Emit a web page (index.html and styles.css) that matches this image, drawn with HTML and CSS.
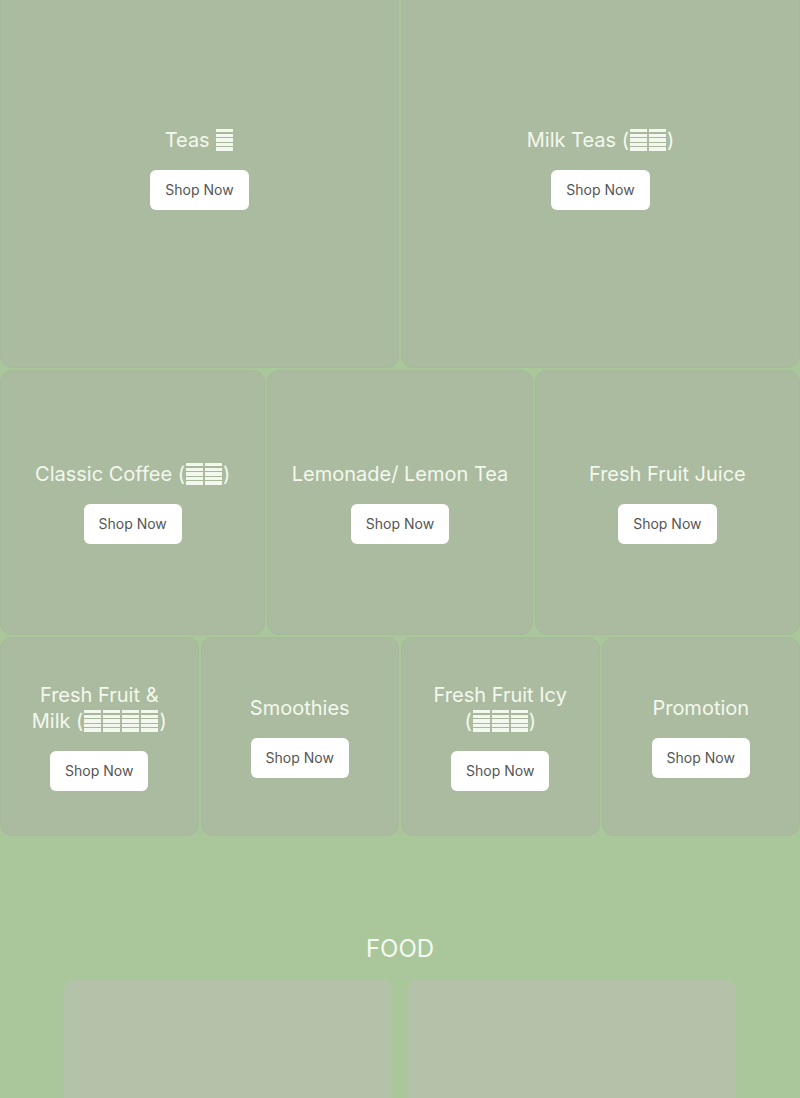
FILE: index.html
```html
<!DOCTYPE html>
<html lang="en">
<head>
<meta charset="utf-8">
<title>Menu</title>
<link rel="stylesheet" href="styles.css">
</head>
<body>
<main class="page">
  <section class="drinks">
    <div class="row row-2">
      <div class="card">
        <h3 class="title">Teas <span class="tofu"></span></h3>
        <a class="btn" href="#">Shop Now</a>
      </div>
      <div class="card">
        <h3 class="title">Milk Teas (<span class="tofu"></span><span class="tofu"></span>)</h3>
        <a class="btn" href="#">Shop Now</a>
      </div>
    </div>
    <div class="row row-3">
      <div class="card">
        <h3 class="title">Classic Coffee (<span class="tofu"></span><span class="tofu"></span>)</h3>
        <a class="btn" href="#">Shop Now</a>
      </div>
      <div class="card">
        <h3 class="title">Lemonade/ Lemon Tea</h3>
        <a class="btn" href="#">Shop Now</a>
      </div>
      <div class="card">
        <h3 class="title">Fresh Fruit Juice</h3>
        <a class="btn" href="#">Shop Now</a>
      </div>
    </div>
    <div class="row row-4">
      <div class="card">
        <h3 class="title">Fresh Fruit &amp;<br>Milk (<span class="tofu"></span><span class="tofu"></span><span class="tofu"></span><span class="tofu"></span>)</h3>
        <a class="btn" href="#">Shop Now</a>
      </div>
      <div class="card">
        <h3 class="title">Smoothies</h3>
        <a class="btn" href="#">Shop Now</a>
      </div>
      <div class="card">
        <h3 class="title">Fresh Fruit Icy<br>(<span class="tofu"></span><span class="tofu"></span><span class="tofu"></span>)</h3>
        <a class="btn" href="#">Shop Now</a>
      </div>
      <div class="card">
        <h3 class="title">Promotion</h3>
        <a class="btn" href="#">Shop Now</a>
      </div>
    </div>
  </section>
  <section class="food">
    <h2 class="food-heading">FOOD</h2>
    <div class="food-grid">
      <div class="food-card"></div>
      <div class="food-card"></div>
    </div>
  </section>
</main>
</body>
</html>
```
FILE: styles.css
```css
html, body {
  margin: 0;
  padding: 0;
}
body {
  background: #a9c79b;
  font-family: Inter, "Noto Sans", sans-serif;
  overflow: hidden;
}
.page {
  margin-top: -31px;
}
.drinks {
  display: flex;
  flex-direction: column;
  gap: 2px;
}
.row {
  display: grid;
  gap: 2px;
}
.row-2 { grid-template-columns: repeat(2, 1fr); }
.row-3 { grid-template-columns: repeat(3, 1fr); }
.row-4 { grid-template-columns: repeat(4, 1fr); }
.card {
  aspect-ratio: 1 / 1;
  background: #abbb9f;
  border-radius: 12px;
  border: 1px solid #a6b99a;
  box-sizing: border-box;
  display: flex;
  flex-direction: column;
  align-items: center;
  justify-content: center;
  gap: 17px;
  padding: 16px;
}
.title {
  margin: 0;
  font-size: 20px;
  line-height: 26px;
  font-weight: 400;
  color: #f3f8ee;
  text-align: center;
}
.tofu {
  display: inline-block;
  width: 17px;
  height: 22px;
  margin: 0 1px;
  vertical-align: -4px;
  background: repeating-linear-gradient(to bottom, #f3f8ee 0, #f3f8ee 3.4px, #a9b89d 3.4px, #a9b89d 4.6px);
}
.btn {
  display: inline-block;
  background: #ffffff;
  color: #555555;
  font-size: 14px;
  line-height: 20px;
  padding: 10px 15px;
  border-radius: 6px;
  text-decoration: none;
}
.food {
  padding-top: 97px;
}
.food-heading {
  margin: 0 0 14px;
  text-align: center;
  font-size: 24px;
  line-height: 32px;
  font-weight: 400;
  color: #f5f9f1;
}
.food-grid {
  max-width: 672px;
  margin: 0 auto;
  display: grid;
  grid-template-columns: repeat(2, 1fr);
  gap: 16px;
}
.food-card {
  height: 328px;
  background: #b5c2aa;
  border-radius: 12px;
}
```
